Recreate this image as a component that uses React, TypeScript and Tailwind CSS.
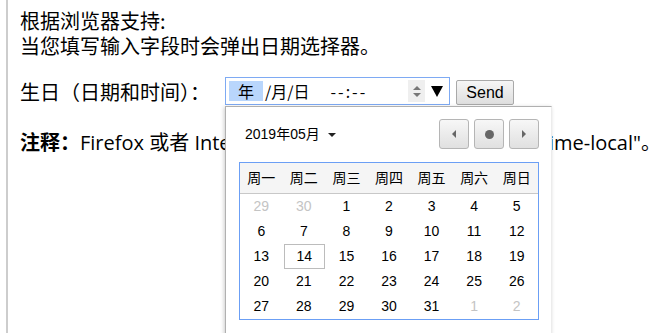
const cjk = "font-['Noto_Sans_CJK_SC',sans-serif]";
const arial = "font-['Liberation_Sans','Noto_Sans_CJK_SC',sans-serif]";

const weekdays = ["周一", "周二", "周三", "周四", "周五", "周六", "周日"];

type Day = { d: number; muted?: boolean; today?: boolean };

const days: Day[] = [
	{ d: 29, muted: true },
	{ d: 30, muted: true },
	...Array.from({ length: 31 }, (_, i) => ({ d: i + 1, today: i + 1 === 14 })),
	{ d: 1, muted: true },
	{ d: 2, muted: true },
];

function NavButton({ children }: { children: React.ReactNode }) {
	return (
		<div className="flex h-[30px] w-[30px] items-center justify-center rounded-[3px] border border-[#b5b5b5] bg-gradient-to-b from-[#f7f7f7] to-[#e0e0e0]">
			{children}
		</div>
	);
}

function Picker() {
	return (
		<div className="absolute left-[225px] top-[106px] h-[260px] w-[327px] border border-[#b0b0b0] border-r-[#ececec] bg-white pl-[13px] pt-[12px] shadow-[-1px_1px_4px_rgba(0,0,0,0.2)]">
			<div className="w-[300px]">
				<div className="flex h-[30px] items-center">
					<div className={`flex items-center pl-[6px] text-[14px] text-black ${arial}`}>
						<span>2019年05月</span>
						<span className="ml-[8px] mt-[1px] h-0 w-0 border-x-[4px] border-t-[4px] border-x-transparent border-t-[#222]" />
					</div>
					<div className="ml-auto flex gap-[5px]">
						<NavButton>
							<span className="h-0 w-0 border-y-[4px] border-r-[4px] border-y-transparent border-r-[#666]" />
						</NavButton>
						<NavButton>
							<span className="h-[9px] w-[9px] rounded-full bg-[#666]" />
						</NavButton>
						<NavButton>
							<span className="h-0 w-0 border-y-[4px] border-l-[4px] border-y-transparent border-l-[#666]" />
						</NavButton>
					</div>
				</div>
				<div className={`mt-[13px] border border-[#6b9ff5] text-[14px] text-black ${arial}`}>
					<div className="grid h-[31px] grid-cols-7 items-center border-b border-[#c8c8c8] bg-[#f5f5f5] text-center">
						{weekdays.map((w) => (
							<span key={w}>{w}</span>
						))}
					</div>
					<div className="grid grid-cols-7 text-center">
						{days.map((day, i) => (
							<div
								key={i}
								className={`flex h-[25px] items-center justify-center ${
									day.muted ? "text-[#c4c4c4]" : "text-black"
								} ${day.today ? "ml-[1px] border border-[#bcbcbc]" : ""}`}
							>
								{day.d}
							</div>
						))}
					</div>
				</div>
			</div>
		</div>
	);
}

function DateInput() {
	return (
		<div className={`flex h-[28px] w-[225px] items-center border border-[#7eaaf3] pl-[3px] text-[16px] leading-none text-black ${cjk}`}>
			<span className="flex h-[20px] w-[34px] items-center justify-center bg-[#b9d6fc]">年</span>
			<span className="ml-[2px]">/月/日</span>
			<span className="ml-[21px] tracking-[2px]">--:--</span>
			<div className="ml-auto flex h-[22px] w-[17px] flex-col items-center justify-center gap-[3px] bg-[#efefef]">
				<span className="h-0 w-0 border-x-[4px] border-b-[4px] border-x-transparent border-b-[#777]" />
				<span className="h-0 w-0 border-x-[4px] border-t-[4px] border-x-transparent border-t-[#777]" />
			</div>
			<div className="flex h-[22px] w-[24px] items-center justify-center">
				<span className="h-0 w-0 border-x-[6px] border-t-[11px] border-x-transparent border-t-black" />
			</div>
		</div>
	);
}

export default function App() {
	return (
		<div className="relative h-[333px] w-[660px] overflow-hidden bg-white">
			<div className={`ml-[6px] h-full border-l-2 border-[#cdcdcd] pl-[12px] pt-[8px] text-[20px] leading-[25px] text-black ${cjk}`}>
				<p>
					根据浏览器支持:
					<br />
					当您填写输入字段时会弹出日期选择器。
				</p>
				<form className="mt-[19px] flex items-center" onSubmit={(e) => e.preventDefault()}>
					<label className="w-[205px]">生日（日期和时间）：</label>
					<DateInput />
					<button
						type="submit"
						className={`ml-[6px] mt-[3px] h-[25px] w-[58px] rounded-[2px] border border-[#a9a9a9] bg-gradient-to-b from-[#f6f6f6] to-[#dedede] text-[16px] leading-none text-black ${arial}`}
					>
						Send
					</button>
				</form>
				<p className="mt-[24px] whitespace-nowrap font-['Open_Sans','Noto_Sans_CJK_SC',sans-serif]">
					<b className={cjk}>注释：</b>Firefox 或者 Internet Explorer 9 不支持 type="datetime-local"。
				</p>
			</div>
			<Picker />
		</div>
	);
}
